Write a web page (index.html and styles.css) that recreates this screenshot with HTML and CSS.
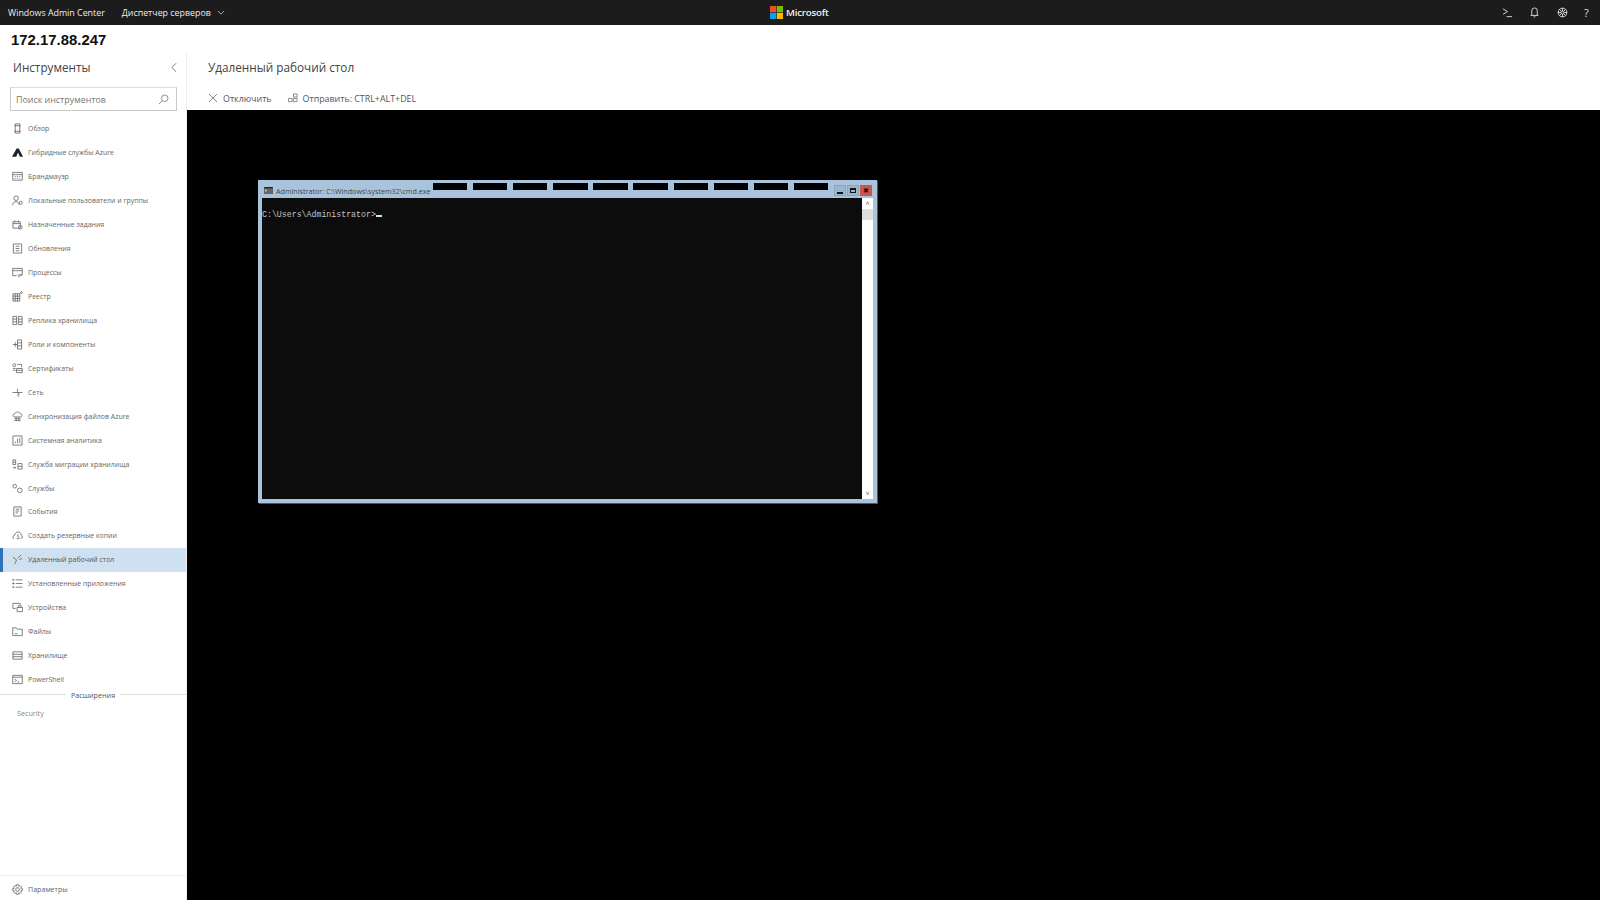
FILE: index.html
```html
<!DOCTYPE html>
<html lang="ru">
<head>
<meta charset="utf-8">
<title>Windows Admin Center</title>
<link rel="stylesheet" href="styles.css">
</head>
<body>
<header class="topbar">
  <span class="brand">Windows Admin Center</span>
  <span class="crumb">Диспетчер серверов</span>
  <svg class="chev" viewBox="0 0 10 6"><path d="M1 1l4 4 4-4"/></svg>
  <div class="ms-logo">
    <svg class="ms-mark" viewBox="0 0 13 13"><rect width="6.2" height="6.2" fill="#f25022"/><rect x="6.8" width="6.2" height="6.2" fill="#7fba00"/><rect y="6.8" width="6.2" height="6.2" fill="#00a4ef"/><rect x="6.8" y="6.8" width="6.2" height="6.2" fill="#ffb900"/></svg>
    <span class="ms-text">Microsoft</span>
  </div>
  <div class="top-icons">
    <svg class="top-ico" viewBox="0 0 12 12"><path d="M1 2l5 3-5 3M5 10.5h6"/></svg>
    <svg class="top-ico" viewBox="0 0 12 12"><path d="M3 9V4a3 3 0 016 0v5M1.8 9.2h8.4M5 10.800h2"/></svg>
    <svg class="top-ico" viewBox="0 0 12 12"><circle cx="6" cy="6" r="4.800"/><circle cx="6" cy="6" r="1.600"/><path d="M6 1.200v3.200M6 7.600v3.200M1.200 6h3.200M7.600 6h3.200M2.600 2.600l2.200 2.200M7.200 7.200l2.200 2.200M9.400 2.600L7.200 4.800M4.800 7.200L2.600 9.400"/></svg>
    <span class="help">?</span>
  </div>
</header>
<div class="server-name">172.17.88.247</div>
<div class="workspace">
  <aside class="sidebar">
    <div class="side-head">
      <span class="side-title">Инструменты</span>
      <svg class="collapse" viewBox="0 0 7 12"><path d="M6 1L1 6l5 5"/></svg>
    </div>
    <div class="search">
      <span class="search-text">Поиск инструментов</span>
      <svg class="search-ico" viewBox="0 0 12 12"><circle cx="7.300" cy="4.700" r="3.600"/><path d="M4.700 7.300L1 11"/></svg>
    </div>
    <nav class="tools">
      <a class="tool"><svg class="ico" viewBox="0 0 12 12"><path d="M3.500 1h5v10h-5zM2.500 3h7M2.500 9h7" stroke="#6b4a3a"/></svg><span>Обзор</span></a>
      <a class="tool"><svg class="ico" viewBox="0 0 12 12"><path class="solid" d="M5 1.500h2.400L12 10.500H8.600L6.600 6 4.600 10.500H0z"/></svg><span>Гибридные службы Azure</span></a>
      <a class="tool"><svg class="ico" viewBox="0 0 12 12"><path d="M.8 1.500h10.400v8.500H.8zM.8 4h10.400M3 6h1M5.500 6h1M8 6h1M3 8h1M5.500 8h1M8 8h1"/></svg><span>Брандмауэр</span></a>
      <a class="tool"><svg class="ico" viewBox="0 0 12 12"><circle cx="4.500" cy="3.500" r="2.500"/><path d="M.8 11c0-5 7-5 7 0"/><circle cx="9.500" cy="8.500" r="1.600"/></svg><span>Локальные пользователи и группы</span></a>
      <a class="tool"><svg class="ico" viewBox="0 0 12 12"><path d="M1 3h8v7H1zM1 5h8M3 1.500v2M7 1.500v2"/><circle cx="9" cy="9" r="2"/></svg><span>Назначенные задания</span></a>
      <a class="tool"><svg class="ico" viewBox="0 0 12 12"><path d="M1.500 1h9v10h-9zM4 3.500h4M4 6h4M4 8.500h4"/></svg><span>Обновления</span></a>
      <a class="tool"><svg class="ico" viewBox="0 0 12 12"><path d="M.8 1.500h10.400v7H7M.8 1.500v8H5M.8 4h10.400M6 9l2 1.500L11 8"/></svg><span>Процессы</span></a>
      <a class="tool"><svg class="ico" viewBox="0 0 12 12"><path d="M1 3h7.500v8H1zM1 5.600h7.500M1 8.300h7.500M3.500 3v8M6 3v8"/><circle cx="10.300" cy="1.800" r="1"/></svg><span>Реестр</span></a>
      <a class="tool"><svg class="ico" viewBox="0 0 12 12"><path d="M1 1.500h4v9H1zM7 1.500h4v9H7zM1 4.500h4M1 7.500h4M7 4.500h4M7 7.500h4"/></svg><span>Реплика хранилища</span></a>
      <a class="tool"><svg class="ico" viewBox="0 0 12 12"><path d="M6 1h4.500v10H6zM6 4.200h4.500M6 7.500h4.500M1 6h5M3.500 3.500v5"/></svg><span>Роли и компоненты</span></a>
      <a class="tool"><svg class="ico" viewBox="0 0 12 12"><circle cx="2.500" cy="2.500" r="1.600"/><path d="M5.500 1.500h5v3M1 6h3M1 8h3M5 6h6.200v4.500H5zM5 8h6.200"/></svg><span>Сертификаты</span></a>
      <a class="tool"><svg class="ico" viewBox="0 0 12 12"><path d="M.5 6h11M6 2v4M6 6l2 1.500L6 9l2 1.500"/></svg><span>Сеть</span></a>
      <a class="tool"><svg class="ico" viewBox="0 0 12 12"><path d="M3 6.500C.5 6.500.5 3 3 3c.5-2.500 5.500-2.500 6 0 2.500 0 2.500 3.500 0 3.500zM2.500 8.500h7M2.500 10.500h7M4.500 6.500v4M7.500 6.500v4"/></svg><span>Синхронизация файлов Azure</span></a>
      <a class="tool"><svg class="ico" viewBox="0 0 12 12"><path d="M1 1h10v10H1zM3.500 9V7M6 9V4M8.500 9V3"/></svg><span>Системная аналитика</span></a>
      <a class="tool"><svg class="ico" viewBox="0 0 12 12"><path d="M1 1h3v5H1zM1 3.500h3M6.500 5H11v6H6.500zM6.500 8H11M1 9.500h3l-1-1M3 10.500l1-1"/></svg><span>Служба миграции хранилища</span></a>
      <a class="tool"><svg class="ico" viewBox="0 0 12 12"><circle cx="3" cy="3.500" r="2"/><circle cx="8.500" cy="8" r="2.500"/></svg><span>Службы</span></a>
      <a class="tool"><svg class="ico" viewBox="0 0 12 12"><path d="M2 1h8v10H2zM4 3.500h4M4 5.500h4M4 7.500h2.500"/></svg><span>События</span></a>
      <a class="tool"><svg class="ico" viewBox="0 0 12 12"><path d="M2.500 9.500C.5 9.500.5 5.800 2.800 5.800 3.500 1 9.500 1 10 5.500c2 .5 1.700 4-.5 4"/><path d="M5 9.500h3M6.500 4.500v3l1.500 1"/></svg><span>Создать резервные копии</span></a>
      <a class="tool active"><svg class="ico" viewBox="0 0 12 12"><path d="M1 3.500l4 3L3 11M6 5l4-4M8 6l3-1"/></svg><span>Удаленный рабочий стол</span></a>
      <a class="tool"><svg class="ico" viewBox="0 0 12 12"><path d="M4 2h7.500M4 6h7.500M4 10h7.500"/><path class="thick" d="M.5 2h2M.5 6h2M.5 10h2"/></svg><span>Установленные приложения</span></a>
      <a class="tool"><svg class="ico" viewBox="0 0 12 12"><path d="M1 7V1.500h8V3M1 7h3M5.500 6h6v4.500h-6zM7 6V4h3v2"/></svg><span>Устройства</span></a>
      <a class="tool"><svg class="ico" viewBox="0 0 12 12"><path d="M.8 2h4l1 1.500h5.400v7H.8zM3 8.500h3"/></svg><span>Файлы</span></a>
      <a class="tool"><svg class="ico" viewBox="0 0 12 12"><path d="M1 2h10v8H1zM1 4.700h10M1 7.300h10"/></svg><span>Хранилище</span></a>
      <a class="tool"><svg class="ico" viewBox="0 0 12 12"><path d="M.8 1.500h10.400v9H.8zM.8 3.500h10.400M3 5.500l2 1.500-2 1.500M6 8.500h2"/></svg><span>PowerShell</span></a>
    </nav>
    <div class="divider"><span>Расширения</span></div>
    <div class="ext">Security</div>
    <div class="side-foot">
      <svg class="ico" viewBox="0 0 12 12"><circle cx="6" cy="6" r="2"/><path d="M5 .8h2l.4 1.600 1.500-.7 1.400 1.400-.7 1.500 1.600.4v2l-1.600.4.7 1.500-1.400 1.400-1.500-.7L7 11.200H5l-.4-1.600-1.500.7L1.700 8.900l.7-1.500L.8 7V5l1.600-.4-.7-1.500 1.400-1.400 1.500.7z"/></svg>
      <span>Параметры</span>
    </div>
  </aside>
  <main class="main">
    <div class="main-head">
      <h1 class="page-title">Удаленный рабочий стол</h1>
      <div class="toolbar">
        <span class="action"><svg class="act-ico" viewBox="0 0 10 10"><path d="M1 1l8 8M9 1L1 9"/></svg>Отключить</span>
        <span class="action"><svg class="act-ico" viewBox="0 0 11 10"><path d="M6 .5h4V4H6zM.5 5.500h4V9H.5zM6 5.500h4V9H6z"/></svg>Отправить: CTRL+ALT+DEL</span>
      </div>
    </div>
    <div class="remote">
      <div class="cmd">
        <div class="cmd-title">
          <svg class="cmd-ico" viewBox="0 0 10 8"><rect width="10" height="8" fill="#222"/><rect y="1.500" width="10" height="6.500" fill="#666"/><path d="M1 3l2 1-2 1" stroke="#fff" fill="none" stroke-width=".8"/></svg>
          <span class="cmd-name">Administrator: C:\Windows\system32\cmd.exe</span>
          <div class="stripes"><i></i><i></i><i></i><i></i><i></i><i></i><i></i><i></i><i></i><i></i></div>
          <div class="win-btns">
            <span class="wb"><b class="min"></b></span>
            <span class="wb"><b class="max"></b></span>
            <span class="wb close">&#10006;</span>
          </div>
        </div>
        <div class="cmd-body">
          <div class="console">C:\Users\Administrator&gt;<span class="caret"></span></div>
          <div class="scroll">
            <span class="arrow">&#708;</span>
            <span class="thumb"></span>
            <span class="track"></span>
            <span class="arrow">&#709;</span>
          </div>
        </div>
      </div>
    </div>
  </main>
</div>
</body>
</html>
```
FILE: styles.css
```css
* { box-sizing: border-box; }
html, body { margin: 0; height: 100%; }
body {
  width: 1600px; height: 900px; overflow: hidden; background: #fff;
  font-family: "Open Sans", "Liberation Sans", sans-serif;
  color: #333; display: flex; flex-direction: column;
}
.topbar {
  height: 25px; flex: none; background: #1c1c1c; color: #eee;
  display: flex; align-items: center; padding-left: 8px; position: relative;
  font-size: 8.850px;
}
.brand { margin-right: 17px; }
.chev { width: 8px; height: 5px; margin-left: 6px; fill: none; stroke: #ccc; stroke-width: 1; }
.ms-logo { position: absolute; left: 770px; top: 6px; display: flex; align-items: center; gap: 3px; }
.ms-mark { width: 13px; height: 13px; }
.ms-text { font-size: 9.700px; font-weight: 600; color: #f2f2f2; letter-spacing: -.2px; }
.top-icons { margin-left: auto; display: flex; align-items: center; gap: 16.500px; padding-right: 9px; }
.top-ico { width: 11px; height: 11px; fill: none; stroke: #ddd; stroke-width: 1; }
.help { font-size: 11px; color: #ddd; width: 7px; }
.server-name {
  height: 28px; flex: none; padding: 4px 0 0 11px;
  font: 700 14.900px/22px "Liberation Sans", sans-serif; color: #111;
}
.workspace { flex: 1; display: flex; min-height: 0; }
.sidebar {
  width: 187px; flex: none; display: flex; flex-direction: column;
  border-right: 1px solid #eee; position: relative;
}
.side-head { height: 34px; flex: none; display: flex; align-items: center; justify-content: space-between; padding: 0 9px 6px 13px; }
.side-title { font-size: 11.700px; color: #444; }
.collapse { width: 6px; height: 11px; fill: none; stroke: #666; stroke-width: 1; }
.search {
  height: 24px; flex: none; margin: 0 9px 0 10px; border: 1px solid #c8c8c8; border-top-color: #ddd;
  display: flex; align-items: center; justify-content: space-between; padding: 0 7px 0 5px;
}
.search-text { font-size: 8.900px; color: #777; }
.search-ico { width: 11px; height: 11px; fill: none; stroke: #888; stroke-width: 1; }
.tools { margin-top: 6px; flex: none; }
.tool {
  height: 23.950px; display: flex; align-items: center; gap: 5px; padding-left: 12px;
  font-size: 6.950px; color: #666;
}
.tool.active { background: #cfe0f0; box-shadow: inset 3px 0 0 #2f72b8; color: #555; }
.ico { width: 11px; height: 11px; flex: none; fill: none; stroke: #555; stroke-width: .8; }
.ico .solid { fill: #222; stroke: none; }
.ico .thick { stroke-width: 1.500; }
.divider {
  flex: none; height: 6px; display: flex; align-items: center; gap: 5px; font-size: 7.200px; color: #555;
}
.divider::before, .divider::after { content: ""; flex: 1; height: 1px; background: #ddd; }
.ext { flex: none; padding: 10px 0 0 17px; font-size: 7.200px; color: #888; }
.side-foot {
  margin-top: auto; height: 25px; flex: none; border-top: 1px solid #eee; padding: 2px 0 0 12px;
  display: flex; align-items: center; gap: 5px; font-size: 7.100px; color: #666;
}
.main { flex: 1; display: flex; flex-direction: column; min-width: 0; }
.main-head { height: 57px; flex: none; padding-left: 21px; }
.page-title { margin: 0; height: 33px; padding-bottom: 6px; display: flex; align-items: center; font-size: 11.750px; font-weight: 400; color: #444; }
.toolbar { display: flex; gap: 16px; height: 24px; align-items: center; font-size: 8.900px; color: #555; }
.action { display: flex; align-items: center; gap: 5px; }
.act-ico { width: 10px; height: 10px; fill: none; stroke: #666; stroke-width: .8; }
.remote { flex: 1; background: #000; position: relative; }
.cmd {
  position: absolute; left: 71px; top: 70px; width: 619px; height: 323px;
  background: #a9c3dc; display: flex; flex-direction: column; padding: 0 4px 4px;
  box-shadow: 1px 1px 0 #555;
}
.cmd-title { height: 18px; flex: none; display: flex; align-items: center; position: relative; color: #444; font-size: 7.170px; }
.cmd-ico { width: 9px; height: 7px; margin: 3px 3px 0 2px; }
.cmd-name { margin-top: 4px; }
.stripes { position: absolute; left: 171px; top: 3px; display: flex; gap: 5.800px; }
.stripes i { display: block; width: 34.300px; height: 7px; background: #000; }
.win-btns { position: absolute; right: 1px; top: 5px; display: flex; gap: 1px; }
.wb {
  width: 12px; height: 11px; background: #9db6d0; border: 1px solid #8aa4be;
  display: flex; align-items: center; justify-content: center;
}
.wb .min { width: 6px; height: 2px; margin-top: 4px; background: #111; }
.wb .max { width: 6px; height: 5px; border: 1px solid #111; border-top-width: 2px; }
.wb.close { background: #c9574d; border-color: #c9574d; color: #111; font-size: 7px; line-height: 1; }
.cmd-body { flex: 1; display: flex; min-height: 0; }
.console {
  flex: 1; background: #0c0c0c; color: #c4c4c4; padding-top: 11px;
  font: 8.250px/12px "Liberation Mono", monospace;
}
.caret { display: inline-block; width: 6px; height: 2px; background: #ddd; }
.scroll { width: 11px; flex: none; background: #fff; display: flex; flex-direction: column; }
.arrow { height: 11px; flex: none; font: 7px/11px "Liberation Sans", sans-serif; color: #666; text-align: center; }
.thumb { height: 11px; flex: none; background: #ddd; }
.track { flex: 1; }
```
